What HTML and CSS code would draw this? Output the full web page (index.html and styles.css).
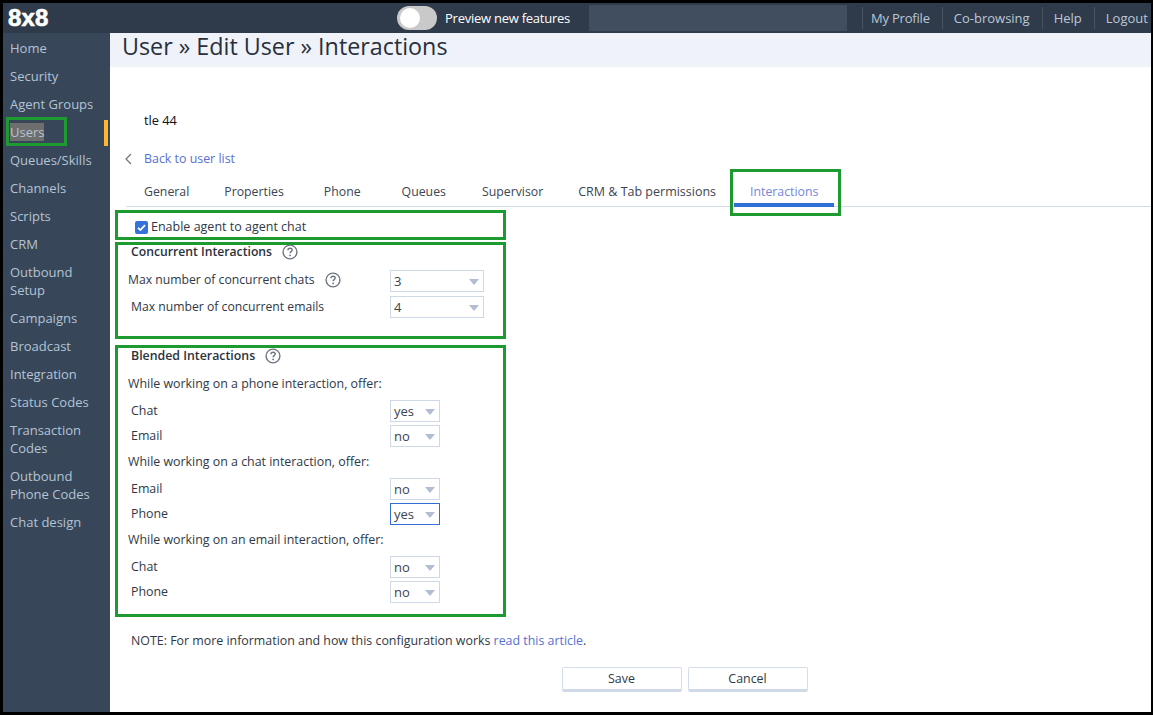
FILE: index.html
```html
<!DOCTYPE html>
<html lang="en">
<head>
<meta charset="utf-8">
<title>User » Edit User » Interactions</title>
<link rel="stylesheet" href="styles.css">
</head>
<body>
<div class="frame">
  <header class="topbar">
    <div class="logo">8x8</div>
    <div class="preview">
      <span class="toggle"><span class="knob"></span></span>
      <span class="preview-label">Preview new features</span>
    </div>
    <div class="blurred"></div>
    <nav class="topnav">
      <a>My Profile</a><a>Co-browsing</a><a>Help</a><a>Logout</a>
    </nav>
  </header>
  <div class="body">
    <aside class="sidebar">
      <a class="item">Home</a>
      <a class="item">Security</a>
      <a class="item">Agent Groups</a>
      <a class="item active"><span class="selected">Users</span><span class="users-box"></span><span class="marker"></span></a>
      <a class="item">Queues/Skills</a>
      <a class="item">Channels</a>
      <a class="item">Scripts</a>
      <a class="item">CRM</a>
      <a class="item">Outbound Setup</a>
      <a class="item">Campaigns</a>
      <a class="item">Broadcast</a>
      <a class="item">Integration</a>
      <a class="item">Status Codes</a>
      <a class="item">Transaction Codes</a>
      <a class="item">Outbound Phone Codes</a>
      <a class="item">Chat design</a>
    </aside>
    <main class="main">
      <div class="titleband"><h1>User » Edit User » Interactions</h1></div>
      <div class="content">
        <div class="username">tle 44</div>
        <a class="back"><svg class="chev" width="8" height="12" viewBox="0 0 8 12"><path d="M7 1 2 6l5 5" fill="none" stroke="#6b7480" stroke-width="1.2"/></svg><span>Back to user list</span></a>
        <div class="tabs">
          <a class="tab t1">General</a>
          <a class="tab t2">Properties</a>
          <a class="tab t3">Phone</a>
          <a class="tab t4">Queues</a>
          <a class="tab t5">Supervisor</a>
          <a class="tab t6">CRM &amp; Tab permissions</a>
          <a class="tab t7 current">Interactions<span class="tab-box"></span></a>
        </div>
        <section class="box box-chat">
          <label class="check"><span class="checkbox"><svg width="13" height="13" viewBox="0 0 13 13"><path d="M3 6.8 5.4 9 10 4.2" fill="none" stroke="#fff" stroke-width="1.8"/></svg></span>Enable agent to agent chat</label>
        </section>
        <section class="box box-concurrent">
          <h2>Concurrent Interactions <svg class="help" width="16" height="16" viewBox="0 0 16 16"><circle cx="8" cy="8" r="6.9" fill="none" stroke="#6b7480" stroke-width="1.4"/><path d="M5.9 6.2C6 4.9 6.9 4.2 8.1 4.2c1.2 0 2.1.8 2.1 1.8 0 1.6-2.1 1.6-2.1 3.3" fill="none" stroke="#6b7480" stroke-width="1.4"/><circle cx="8.1" cy="11.4" r=".9" fill="#6b7480"/></svg></h2>
          <div class="row row-a wide"><span class="lbl out">Max number of concurrent chats <svg class="help" width="16" height="16" viewBox="0 0 16 16"><circle cx="8" cy="8" r="6.9" fill="none" stroke="#6b7480" stroke-width="1.4"/><path d="M5.9 6.2C6 4.9 6.9 4.2 8.1 4.2c1.2 0 2.1.8 2.1 1.8 0 1.6-2.1 1.6-2.1 3.3" fill="none" stroke="#6b7480" stroke-width="1.4"/><circle cx="8.1" cy="11.4" r=".9" fill="#6b7480"/></svg></span><span class="sel long">3<i></i></span></div>
          <div class="row row-b wide"><span class="lbl">Max number of concurrent emails</span><span class="sel long">4<i></i></span></div>
        </section>
        <section class="box box-blended">
          <h2>Blended Interactions <svg class="help" width="16" height="16" viewBox="0 0 16 16"><circle cx="8" cy="8" r="6.9" fill="none" stroke="#6b7480" stroke-width="1.4"/><path d="M5.9 6.2C6 4.9 6.9 4.2 8.1 4.2c1.2 0 2.1.8 2.1 1.8 0 1.6-2.1 1.6-2.1 3.3" fill="none" stroke="#6b7480" stroke-width="1.4"/><circle cx="8.1" cy="11.4" r=".9" fill="#6b7480"/></svg></h2>
          <p class="offer first">While working on a phone interaction, offer:</p>
          <div class="row"><span class="lbl">Chat</span><span class="sel">yes<i></i></span></div>
          <div class="row"><span class="lbl">Email</span><span class="sel">no<i></i></span></div>
          <p class="offer">While working on a chat interaction, offer:</p>
          <div class="row"><span class="lbl">Email</span><span class="sel">no<i></i></span></div>
          <div class="row"><span class="lbl">Phone</span><span class="sel focus">yes<i></i></span></div>
          <p class="offer">While working on an email interaction, offer:</p>
          <div class="row"><span class="lbl">Chat</span><span class="sel">no<i></i></span></div>
          <div class="row"><span class="lbl">Phone</span><span class="sel">no<i></i></span></div>
        </section>
        <p class="note">NOTE: For more information and how this configuration works <a>read this article</a>.</p>
        <div class="actions"><button>Save</button><button>Cancel</button></div>
      </div>
    </main>
  </div>
</div>
</body>
</html>
```
FILE: styles.css
```css
* { box-sizing: border-box; }
html, body { margin: 0; height: 100%; }
body { font-family: "Open Sans", "Noto Sans", sans-serif; font-size: 12.4px; color: #2f3846; background: #fff; overflow: hidden; }
.frame { width: 1153px; height: 715px; border: solid #000; border-width: 3px 2px 3px 3px; display: flex; flex-direction: column; overflow: hidden; }
.topbar { height: 30px; flex: none; background: #2f3b4b; display: flex; align-items: center; color: #bcc7d6; }
.logo { flex: none; font-family: "Liberation Sans", sans-serif; font-weight: 700; font-size: 24px; color: #fff; padding-left: 5px; width: 394px; line-height: 30px; letter-spacing: .2px; -webkit-text-stroke: .6px #fff; }
.preview { flex: none; display: flex; align-items: center; width: 192px; }
.toggle { width: 40px; height: 24px; border-radius: 12px; background: #c9c9c9; display: block; padding: 2px 0 0 3px; }
.knob { display: block; width: 20px; height: 20px; border-radius: 50%; background: #fff; }
.preview-label { color: #fff; margin-left: 8px; font-size: 13px; letter-spacing: -.25px; white-space: nowrap; }
.blurred { width: 258px; height: 26px; background: #404e60; flex: none; }
.topnav { flex: none; display: flex; margin-left: 15px; font-size: 13px; }
.topnav a { border-left: 1px solid #46525f; padding: 0 12px 0 11px; line-height: 22px; white-space: nowrap; }
.topnav a:first-child { padding-left: 8px; letter-spacing: -.2px; }
.topnav a:last-child { padding-right: 0; }
.body { flex: 1; display: flex; min-height: 0; }
.sidebar { width: 107px; flex: none; background: #374759; padding: 1px 0 0 7px; }
.item { display: flex; align-items: center; position: relative; min-height: 28px; line-height: 18px; padding: 5px 0; font-size: 13px; color: #b4c3d6; width: 88px; }
.selected { background: #6e6e6e; color: #b4c3d6; line-height: 18px; }
.users-box { position: absolute; left: -4px; top: -1px; width: 61px; height: 29px; border: 3px solid #1e9b30; }
.marker { position: absolute; left: 94px; top: 2px; width: 4px; height: 26px; background: #ffb52e; }
.main { flex: 1; min-width: 0; }
.titleband { height: 34px; background: #eff2f8; }
h1 { margin: 0; padding-left: 12px; font-weight: 400; font-size: 23.3px; line-height: 26px; color: #27303c; }
.content { position: relative; padding-left: 5px; }
.username { margin: 44px 0 0 29px; font-size: 12.8px; color: #111; line-height: 18px; }
.back { display: flex; align-items: center; margin: 21px 0 0 9px; color: #5670d4; line-height: 18px; }
.chev { margin-right: 12px; }
.tabs { display: flex; margin: 7px 0 0 11px; height: 32px; border-bottom: 1px solid #d3dbe9; font-size: 12.3px; }
.tab { display: block; line-height: 18px; padding-top: 8px; white-space: nowrap; color: #3c4552; position: relative; }
.t1 { margin-left: 18px; }
.t2 { margin-left: 35px; }
.t3 { margin-left: 40px; }
.t4 { margin-left: 41px; }
.t5 { margin-left: 36px; }
.t6 { margin-left: 35px; font-size: 12.5px; }
.t7 { margin-left: 34px; color: #7687dc; }
.current::after { content: ""; position: absolute; left: -16px; right: -16px; bottom: -1px; height: 4px; background: #2f6fd6; }
.tab-box { position: absolute; left: -20px; right: -23px; top: -6px; height: 47px; border: 3px solid #1e9b30; }
.box { width: 391px; border: 3px solid #1e9b30; padding-left: 1px; }
.box-chat { height: 30px; margin-top: 3px; padding: 5px 0 0 17px; }
.box-concurrent { height: 97px; margin-top: 2px; }
.box-blended { height: 272px; margin-top: 6px; }
.check { display: flex; align-items: center; line-height: 18px; font-size: 12.5px; }
.checkbox { width: 13px; height: 13px; background: #3573db; border-radius: 2px; margin-right: 3px; display: block; }
.checkbox svg { display: block; }
h2 { margin: 0; padding-left: 12px; font-size: 12.2px; font-weight: 600; line-height: 14px; height: 14px; color: #2a323d; display: flex; align-items: center; }
h2 .help { margin-left: 10px; }
.box-blended h2 { height: 15px; padding-top: 1px; font-size: 12.35px; }
.row { display: flex; align-items: center; justify-content: space-between; width: 321px; height: 24px; padding-left: 12px; }
.row + .row { margin-top: 1px; }
.wide { width: 365px; font-size: 12.2px; }
.row-a { margin-top: 10px; }
.row + .row-b { margin-top: 2px; }
.lbl { display: flex; align-items: center; line-height: 18px; }
.lbl .help { margin-left: 10px; }
.out { margin-left: -3px; margin-bottom: 2px; }
.sel { width: 50px; height: 22px; border: 1px solid #cfd8e6; position: relative; display: block; line-height: 20px; padding-left: 3px; font-size: 13px; color: #3a4350; }
.sel.long { width: 94px; }
.sel.focus { border-color: #2f6fd6; }
.sel i { position: absolute; right: 4px; top: 8px; border: solid transparent; border-width: 6px 5px 0; border-top-color: #b2bdd2; }
.offer { margin: 5px 0 6px 9px; line-height: 18px; }
.offer.first { margin-top: 12px; }
.note { margin: 15px 0 0 16px; line-height: 18px; }
.note a { color: #5670d4; }
.actions { display: flex; justify-content: center; gap: 6px; margin: 17px 0 0 172px; width: 795px; }
button { width: 120px; height: 25px; background: #fff; border: 1px solid #d5dde9; border-bottom: 3px solid #cfd9e8; border-radius: 2px; font: inherit; color: #2f3846; padding: 0; }
```
